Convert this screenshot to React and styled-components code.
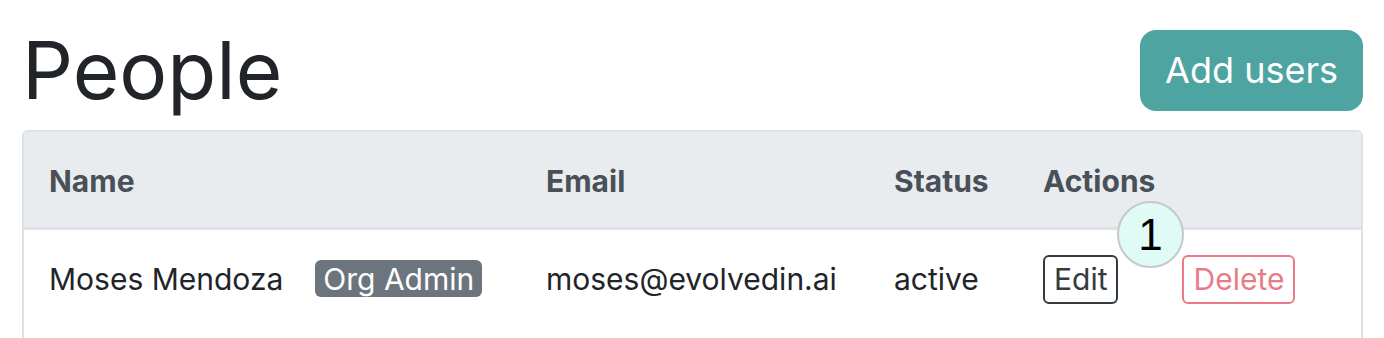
import React from 'react';
import styled, { createGlobalStyle } from 'styled-components';

const GlobalStyle = createGlobalStyle`
  body {
    margin: 0;
    background: #fff;
    font-family: 'Inter', 'Noto Sans', sans-serif;
    color: #212529;
  }
`;

const Page = styled.div`
  padding: 22px 21px 0 22px;
`;

const Header = styled.div`
  display: flex;
  align-items: center;
  justify-content: space-between;
  margin-bottom: 12px;
`;

const Title = styled.h1`
  margin: 0;
  font-size: 80px;
  font-weight: 400;
  line-height: 96px;
  color: #212529;
`;

const PrimaryButton = styled.button`
  font-family: inherit;
  font-size: 36px;
  line-height: 54px;
  font-weight: 400;
  color: #fff;
  background: #4ea4a1;
  border: none;
  border-radius: 16px;
  padding: 13.5px 25px;
  cursor: pointer;
`;

const Table = styled.div`
  border: 2px solid #dee2e6;
  border-radius: 6px;
  overflow: hidden;
`;

const Row = styled.div`
  display: grid;
  grid-template-columns: 497px 348px 149px 1fr;
  align-items: start;
  background: ${p => (p.$head ? '#e9ecef' : '#fff')};
  border-bottom: ${p => (p.$head ? '3px solid #dee2e6' : 'none')};
  padding-bottom: ${p => (p.$head ? '0' : '20px')};
`;

const Cell = styled.div`
  padding: ${p => (p.$control ? '25px' : '27px 25px 23px')};
  font-size: 30px;
  line-height: 45px;
  font-weight: ${p => (p.$head ? 700 : 400)};
  color: ${p => (p.$head ? '#495057' : '#212529')};
  display: flex;
  align-items: center;
  white-space: nowrap;
`;

const NameText = styled.span`
  margin-right: 32px;
`;

const Badge = styled.span`
  display: inline-block;
  background: #6c757d;
  color: #fff;
  font-size: 30px;
  line-height: 30px;
  padding: 3.5px 8px;
  border-radius: 6px;
  margin-top: -2px;
`;

const Actions = styled.div`
  position: relative;
  display: flex;
  align-items: center;
  gap: 64px;
`;

const OutlineButton = styled.button`
  font-family: inherit;
  font-size: 30px;
  line-height: 45px;
  padding: 0 9px;
  background: #fff;
  border-radius: 6px;
  border: 2px solid ${p => p.$color};
  color: ${p => p.$color};
  opacity: ${p => (p.$disabled ? 0.65 : 1)};
`;

const Marker = styled.div`
  position: absolute;
  left: 74px;
  top: -54px;
  width: 63px;
  height: 63px;
  border-radius: 50%;
  background: #e0faf6;
  border: 2px solid #c6c9c8;
  display: flex;
  align-items: center;
  justify-content: center;
  font-family: 'Liberation Sans', Arial, sans-serif;
  font-size: 44px;
  color: #000;
`;

export default function App() {
  return (
    <>
      <GlobalStyle />
      <Page>
        <Header>
          <Title>People</Title>
          <PrimaryButton>Add users</PrimaryButton>
        </Header>
        <Table>
          <Row $head>
            <Cell $head>Name</Cell>
            <Cell $head>Email</Cell>
            <Cell $head>Status</Cell>
            <Cell $head>Actions</Cell>
          </Row>
          <Row>
            <Cell>
              <NameText>Moses Mendoza</NameText>
              <Badge>Org Admin</Badge>
            </Cell>
            <Cell>moses@evolvedin.ai</Cell>
            <Cell>active</Cell>
            <Cell $control>
              <Actions>
                <OutlineButton $color="#343a40">Edit</OutlineButton>
                <OutlineButton $color="#dc3545" $disabled>Delete</OutlineButton>
                <Marker>1</Marker>
              </Actions>
            </Cell>
          </Row>
        </Table>
      </Page>
    </>
  );
}
